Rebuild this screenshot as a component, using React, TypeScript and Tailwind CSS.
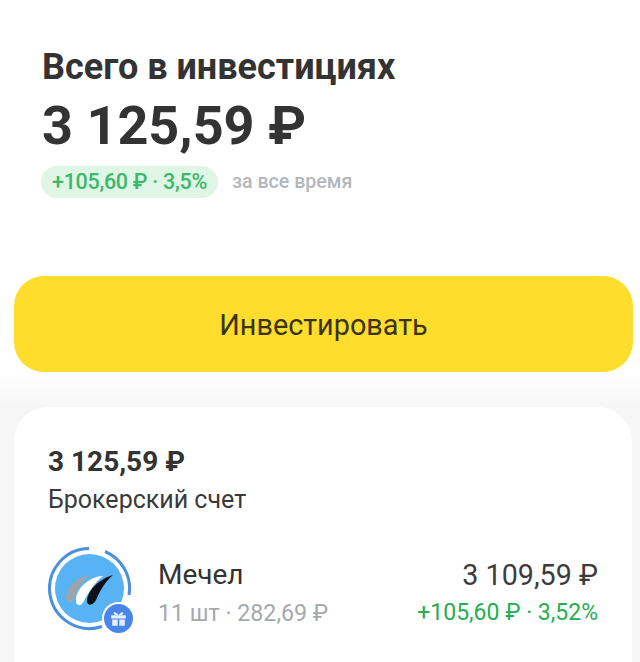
export default function App() {
  return (
    <div className="h-[662px] w-[640px] overflow-hidden bg-[linear-gradient(to_bottom,#ffffff_0px,#ffffff_372px,#f6f6f7_410px,#f6f6f7_662px)] font-['Roboto',sans-serif] text-[#333333]">
      <div className="px-[42px] pt-[46px]">
        <div className="text-[36px] font-bold leading-[42px]">Всего в инвестициях</div>
        <div className="mt-[5px] text-[54px] font-bold leading-[66px]">3 125,59 ₽</div>
        <div className="mt-[7px] flex items-center">
          <div className="-ml-px flex h-[32px] items-center rounded-full bg-[#dff5e5] px-[11px] text-[21.5px] font-medium tracking-[-0.3px] text-[#3cb868]">+105,60 ₽ · 3,5%</div>
          <div className="ml-[14px] text-[19.600px] font-medium text-[#b4b7bc]">за все время</div>
        </div>
      </div>
      <div className="ml-[14px] mt-[78px] flex h-[96px] w-[619px] items-center justify-center rounded-[30px] bg-[#ffdd2d] pt-[3px] text-[28.800px] text-[#3a3413]">Инвестировать</div>
      <div className="ml-[14px] mt-[35px] h-[300px] w-[618px] rounded-[34px] bg-white px-[34px] pt-[38px]">
        <div className="text-[28px] font-bold leading-[34px]">3 125,59 ₽</div>
        <div className="mt-[7px] text-[25px] leading-[28px] text-[#3a3a3a]">Брокерский счет</div>
        <div className="mt-[33px] flex items-start">
          <div className="relative h-[88px] w-[88px] shrink-0">
            <svg viewBox="0 0 88 88" className="h-[88px] w-[88px]">
              <circle cx="41.500" cy="41.500" r="34.500" fill="#57b3f4" />
              <path d="M41 1.500 A40 40 0 1 0 54 79.500 M57 4.500 A40 40 0 0 1 81 48" fill="none" stroke="#4a8fe0" strokeWidth="3" />
              <path d="M18 50 C20 38 30 30 41 28 C33 34 28 45 25 53 C23 57 18 55 18 50 Z" fill="#a0a4a8" />
              <path d="M28 54 C27 42 42 29 55 29 C47 35 40 46 36 54 C33 60 28 59 28 54 Z" fill="#ffffff" />
              <path d="M39 54 C40 42 52 32 65 28 C56 36 52 44 48 53 C45 59 39 59 39 54 Z" fill="#0d1116" />
            </svg>
            <div className="absolute left-[56px] top-[57px] flex h-[29px] w-[29px] items-center justify-center rounded-full bg-[#4a86e8] ring-2 ring-white">
              <svg viewBox="0 0 20 20" className="h-[21px] w-[21px]" fill="#e6effd">
                <path d="M3 7h14v3H3zM4 11h5.200v6H4zM10.800 11H16v6h-5.200z" />
                <path d="M10 7C8 3 4.500 3.500 5.500 5.500 6 6.600 8 7 10 7Zm0 0c2-4 5.500-3.500 4.500-1.500C14 6.600 12 7 10 7Z" />
              </svg>
            </div>
          </div>
          <div className="ml-[22px] mt-[11px] flex-1">
            <div className="flex items-center justify-between">
              <div className="text-[28px] leading-[34px]">Мечел</div>
              <div className="text-[28.700px] leading-[34px] text-[#3c3c3c]">3 109,59 ₽</div>
            </div>
            <div className="mt-[6px] flex items-center justify-between">
              <div className="text-[23.200px] leading-[30px] text-[#a6a9ae]">11 шт · 282,69 ₽</div>
              <div className="text-[23px] leading-[30px] text-[#26ad50]">+105,60 ₽ · 3,52%</div>
            </div>
          </div>
        </div>
      </div>
    </div>
  );
}
